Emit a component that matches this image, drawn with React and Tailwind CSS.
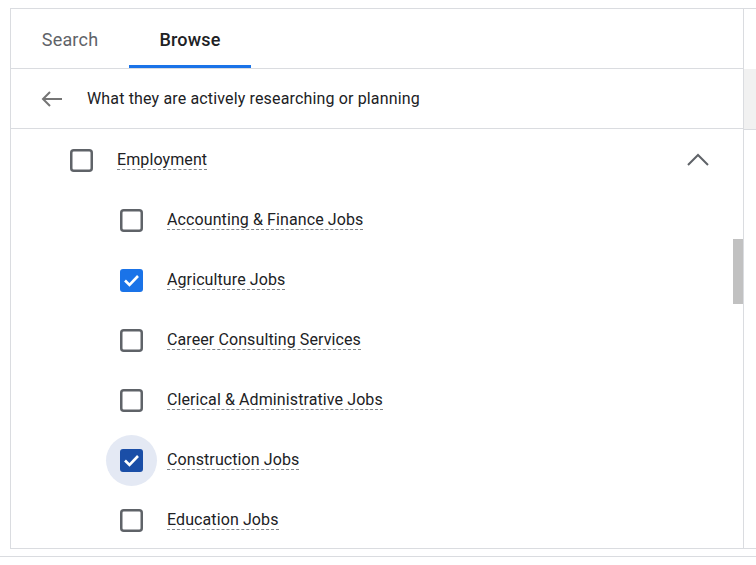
import React from 'react';

const items = [
    { name: 'Accounting & Finance Jobs', checked: false },
    { name: 'Agriculture Jobs', checked: true },
    { name: 'Career Consulting Services', checked: false },
    { name: 'Clerical & Administrative Jobs', checked: false },
    { name: 'Construction Jobs', checked: true, focused: true },
    { name: 'Education Jobs', checked: false },
];

function Checkbox({ checked, focused }) {
    return (
        <div className="relative w-[23px] h-[23px] shrink-0">
            {focused && <div className="absolute -inset-[14px] rounded-full bg-[#e4e9f4]" />}
            <svg className="relative" width="23" height="23" viewBox="0 0 23 23">
                {checked ? (
                    <>
                        <rect x="0" y="0" width="23" height="23" rx="3" fill={focused ? '#1a4ea7' : '#1a73e8'} />
                        <polyline points="5,11.5 9.5,16 18,7" fill="none" stroke="#fff" strokeWidth="2.6" />
                    </>
                ) : (
                    <rect x="1.25" y="1.25" width="20.5" height="20.5" rx="2.5" fill="none" stroke="#5f6368" strokeWidth="2.5" />
                )}
            </svg>
        </div>
    );
}

function Label({ children }) {
    return (
        <span className="text-[16px] leading-[19px] tracking-[0.1px] text-[#202124] border-b border-dashed border-[#80868b]">
            {children}
        </span>
    );
}

export default function App() {
    return (
        <div className="bg-white w-[756px] h-[565px] overflow-hidden pt-[8px]" style={{ fontFamily: 'Roboto, "Liberation Sans", sans-serif' }}>
            <div className="ml-[10px] flex border-t border-l border-b border-[#dadce0]">
                {/* main panel */}
                <div className="w-[733px] border-r border-[#dadce0] flex flex-col">
                    {/* tabs */}
                    <div className="h-[60px] flex border-b border-[#dadce0]">
                        <div className="w-[118px] flex flex-col">
                            <div className="flex-1 flex items-center justify-center pt-[5px] text-[18px] text-[#5f6368] tracking-[0.2px]">Search</div>
                            <div className="h-[3px]" />
                        </div>
                        <div className="w-[122px] flex flex-col">
                            <div className="flex-1 flex items-center justify-center pt-[5px] text-[18px] font-medium text-[#202124] tracking-[0.2px]">Browse</div>
                            <div className="h-[3px] bg-[#1a73e8]" />
                        </div>
                    </div>

                    {/* back row */}
                    <div className="h-[60px] flex items-center border-b border-[#dadce0]">
                        <svg className="ml-[29px]" width="24" height="24" viewBox="0 0 24 24">
                            <path d="M22 12H3M10 5l-7 7 7 7" fill="none" stroke="#757575" strokeWidth="2" />
                        </svg>
                        <span className="ml-[23px] text-[16px] tracking-[0.15px] text-[#202124]">What they are actively researching or planning</span>
                    </div>

                    {/* list */}
                    <div className="relative h-[419px] overflow-hidden pt-[1px]">
                        <div className="h-[60px] flex items-center pl-[59px] pr-[34px]">
                            <Checkbox checked={false} />
                            <div className="ml-[24px] flex-1">
                                <Label>Employment</Label>
                            </div>
                            <svg width="22" height="14" viewBox="0 0 22 14">
                                <polyline points="1,12 11,2 21,12" fill="none" stroke="#5f6368" strokeWidth="2" />
                            </svg>
                        </div>
                        {items.map((item) => (
                            <div key={item.name} className="h-[60px] flex items-center pl-[109px]">
                                <Checkbox checked={item.checked} focused={item.focused} />
                                <div className="ml-[24px]">
                                    <Label>{item.name}</Label>
                                </div>
                            </div>
                        ))}
                        <div className="absolute right-0 top-[110px] w-[10px] h-[65px] bg-[#c1c1c1]" />
                    </div>
                </div>

                {/* right gutter */}
                <div className="flex-1 flex flex-col">
                    <div className="h-[60px]" />
                    <div className="h-[61px] bg-[#f1f1f1] border-b border-[#dadce0]" />
                </div>
            </div>
            <div className="mt-[7px] border-t border-[#dadce0]" />
        </div>
    );
}
